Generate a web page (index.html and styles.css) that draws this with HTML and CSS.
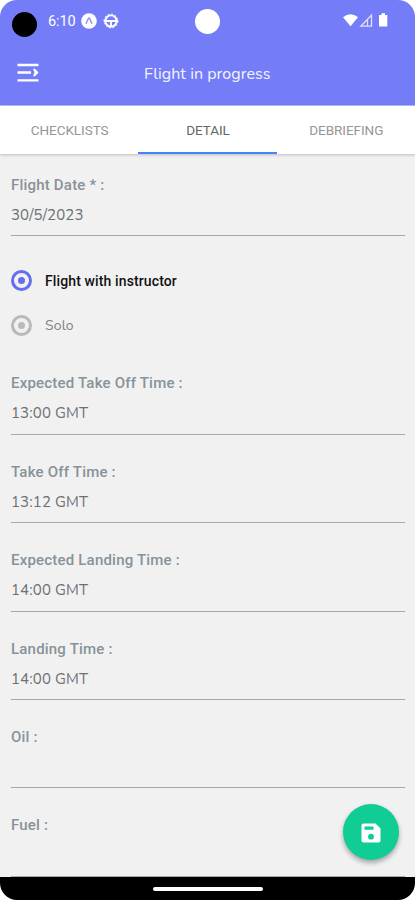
FILE: index.html
```html
<!DOCTYPE html>
<html lang="en">
<head>
<meta charset="utf-8">
<title>Flight in progress</title>
<link rel="stylesheet" href="styles.css">
</head>
<body>
<div class="phone">
  <header class="header">
    <div class="status">
      <span class="lens"></span>
      <span class="clock">6:10</span>
      <svg class="status-icon" viewBox="0 0 16 16"><circle cx="8" cy="8" r="7.800" fill="#fff"/><path d="M5 10.700 7.200 5.800Q8 4.300 8.800 5.800L11 10.700" fill="none" stroke="#8d94f8" stroke-width="1.500"/></svg>
      <svg class="status-icon wheel" viewBox="0 0 16 16" fill="none" stroke="#fff"><circle cx="8" cy="8" r="5.600" stroke-width="1.900"/><path d="M.8 8h14.400M8 8v6" stroke-width="1.900"/><circle cx="8" cy="8" r="6.900" stroke-width="1" stroke-dasharray="2 1.600"/></svg>
      <span class="camera"></span>
      <svg class="signals" viewBox="0 0 46 16" fill="#fff"><path d="M0 4.300Q7.500-1.800 15 4.300L7.500 13.200Z"/><path d="M17.800 13.200 28.500 2v11.200Z" fill="none" stroke="#dfe1ff" stroke-width="1.300"/><path d="M24.500 6.500V13.200" stroke="#dfe1ff" stroke-width="1.200"/><path d="M38.500.3h3.500V2h2.300v11.600H36V2h2.500Z"/></svg>
    </div>
    <div class="toolbar">
      <svg class="menu" viewBox="0 0 22 20" fill="none" stroke="#fff" stroke-width="2.300"><path d="M.5 2h21M.5 9.500h13.500M.5 17.300h21"/><path d="M16 5.800 18 5.800 21.500 9.500 18 13.200H16L17.500 9.500Z" fill="#fff" stroke="none"/></svg>
      <h1 class="title">Flight in progress</h1>
    </div>
  </header>
  <nav class="tabs">
    <span class="tab">CHECKLISTS</span>
    <span class="tab active">DETAIL</span>
    <span class="tab">DEBRIEFING</span>
  </nav>
  <main class="form">
    <div class="field"><span class="label">Flight Date * :</span><span class="value date">30/5/2023</span></div>
    <div class="choices">
      <div class="choice selected"><span class="radio"></span><span class="choice-text">Flight with instructor</span></div>
      <div class="choice"><span class="radio"></span><span class="choice-text solo">Solo</span></div>
    </div>
    <div class="field"><span class="label">Expected Take Off Time :</span><span class="value">13:00 GMT</span></div>
    <div class="field"><span class="label">Take Off Time :</span><span class="value">13:12 GMT</span></div>
    <div class="field"><span class="label">Expected Landing Time :</span><span class="value">14:00 GMT</span></div>
    <div class="field"><span class="label">Landing Time :</span><span class="value">14:00 GMT</span></div>
    <div class="field"><span class="label">Oil :</span><span class="value"></span></div>
    <div class="field"><span class="label">Fuel :</span><span class="value"></span></div>
  </main>
  <div class="save">
    <svg viewBox="0 0 20 20"><path d="M2.500.5H14.500L19.500 5.500V17.500Q19.500 19.500 17.500 19.500H2.500Q.5 19.500.5 17.500V2.500Q.5.5 2.500.5Z" fill="#fff"/><path d="M3.500 3.400h9v3.400h-9Z" fill="#0fcd94"/><circle cx="10" cy="13.700" r="2.900" fill="#0fcd94"/></svg>
  </div>
  <footer class="navbar"><span class="handle"></span></footer>
</div>
</body>
</html>
```

FILE: styles.css
```css
* { box-sizing: border-box; }
body { margin: 0; background: #fff; font-family: Roboto, sans-serif; }
.phone {
  position: relative;
  display: flex;
  flex-direction: column;
  width: 415px;
  height: 900px;
  overflow: hidden;
  border-radius: 17px;
  background: #f1f1f1;
}
.header { flex: none; height: 106px; background: #747df7; border-bottom: 1px solid #b7bbfb; }
.status { position: relative; display: flex; align-items: center; height: 41px; padding: 0 32px 0 12px; }
.lens { width: 25px; height: 25px; margin-top: 8px; border-radius: 50%; background: #000; }
.clock { margin-left: 11px; margin-top: 2px; width: 27px; font: 400 14.500px/20px Roboto, sans-serif; letter-spacing: -.1px; color: #fff; }
.status-icon { width: 16px; height: 16px; margin-left: 6px; }
.wheel { margin-left: 6px; }
.camera { position: absolute; left: 195px; top: 9px; width: 25px; height: 25px; border-radius: 50%; background: #fff; }
.signals { width: 46px; height: 16px; margin-left: auto; margin-top: 1px; margin-right: -6px; }
.toolbar { display: flex; align-items: center; height: 64px; padding-left: 17px; }
.menu { flex: none; width: 22px; height: 20px; }
.title { margin: 1px 0 0 105px; font: 400 16px/22px "Nunito", "Noto Sans", sans-serif; letter-spacing: .06px; white-space: nowrap; color: #f4f5ff; }
.tabs { position: relative; flex: none; display: flex; height: 48px; background: #fff; box-shadow: 0 1px 3px rgba(0, 0, 0, .22); }
.tab { flex: 1; display: flex; align-items: center; justify-content: center; padding: 2px 0 0 1px; border-bottom: 2px solid transparent; font-size: 13.500px; font-weight: 400; letter-spacing: -.05px; color: #969696; }
.tab.active { border-color: #4485f5; color: #666; }
.form { flex: 1; min-height: 0; padding: 22px 10px 0 11px; }
.field { display: flex; flex-direction: column; height: 60.400px; margin-bottom: 28px; border-bottom: 1.500px solid #a6a9aa; }
.label { align-self: flex-start; height: 19px; font-size: 15px; font-weight: 500; line-height: 19px; letter-spacing: .2px; white-space: nowrap; color: #87939a; }
.value { align-self: flex-start; height: 22px; margin-top: 9px; font: 400 15px/22px "Nunito", "Noto Sans", sans-serif; letter-spacing: .12px; white-space: nowrap; color: #6b7072; }
.choices { display: flex; flex-direction: column; gap: 23px; height: 110px; padding-top: 5px; }
.choice { display: flex; align-items: center; gap: 13px; height: 22px; color: #828282; }
.radio { display: grid; place-items: center; width: 21px; height: 21px; border: 3px solid #b9b9b9; border-radius: 50%; }
.radio::after { content: ""; width: 7px; height: 7px; border-radius: 50%; background: #b9b9b9; }
.selected { color: #111; }
.selected .radio { border-color: #656df3; }
.selected .radio::after { background: #656df3; }
.choice-text { padding-top: 2px; font: 500 14px/20px Roboto, sans-serif; letter-spacing: .12px; }
.solo { font: 400 14px/20px "Nunito", "Noto Sans", sans-serif; }
.save { position: absolute; right: 16px; bottom: 40px; display: grid; place-items: center; width: 56px; height: 56px; border-radius: 50%; background: #0fcd94; box-shadow: 0 3px 5px rgba(0, 0, 0, .32); }
.save svg { width: 20px; height: 20px; margin-top: 2px; }
.navbar { position: relative; flex: none; display: flex; justify-content: center; height: 23px; padding-top: 10px; background: #000; }
.handle { width: 110px; height: 4px; border-radius: 2px; background: #fff; }
```
